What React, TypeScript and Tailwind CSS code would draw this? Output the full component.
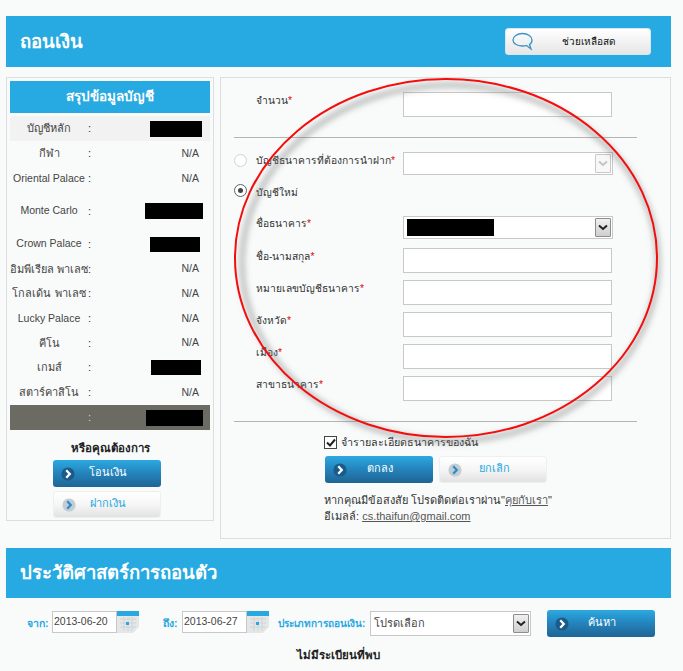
import React from "react";

const font = "font-['Liberation_Sans','Noto_Sans','DejaVu_Sans',sans-serif]";

const ChevronBadge: React.FC<{ light?: boolean }> = ({ light }) => (
  <svg width="14" height="14" viewBox="0 0 16 16" className="shrink-0">
    <circle cx="8" cy="8" r="7.5" fill={light ? "#c4cdd3" : "#1b5b8c"} />
    <path d="M6 3.8 L10 8 L6 12.2" fill="none" stroke={light ? "#2a8fc9" : "#ffffff"} strokeWidth="2.6" />
  </svg>
);

const ActionButton: React.FC<{ label: string; light?: boolean; className?: string }> = ({ label, light, className }) => (
  <div
    className={`relative flex h-[27px] w-[108px] items-center rounded-[3px] pl-[8px] text-[11px] ${
      light
        ? "border border-[#eef0f0] bg-gradient-to-b from-[#ffffff] via-[#f6f6f6] to-[#e2e2e2] text-[#27a8e0]"
        : "bg-gradient-to-b from-[#2ca9e2] via-[#2483bb] to-[#1f6495] text-white"
    } ${className ?? ""}`}
  >
    <ChevronBadge light={light} />
    <span className="flex-1 pr-[20px] pb-[2px] text-center">{label}</span>
  </div>
);

type Row = { label: string; value?: string; h: string; mask?: string; cls?: string; latin?: boolean };

const rows: Row[] = [
  { label: "บัญชีหลัก", h: "h-[25px]", mask: "w-[52px] h-[16px] mr-[8px]", cls: "bg-[#f2f2f2]" },
  { label: "กีฬา", value: "N/A", h: "h-[25px]" },
  { label: "Oriental Palace", value: "N/A", h: "h-[25px]", latin: true },
  { label: "Monte Carlo", h: "h-[40px]", mask: "w-[58px] h-[16px] mr-[7px]", latin: true },
  { label: "Crown Palace", h: "h-[26px]", mask: "w-[50px] h-[15px] mr-[10px]", latin: true },
  { label: "อิมพีเรียล พาเลซ", value: "N/A", h: "h-[24px]" },
  { label: "โกลเด้น พาเลซ", value: "N/A", h: "h-[25px]" },
  { label: "Lucky Palace", value: "N/A", h: "h-[25px]", latin: true },
  { label: "คีโน", value: "N/A", h: "h-[24px]" },
  { label: "เกมส์", h: "h-[25px]", mask: "w-[50px] h-[15px] mr-[9px]" },
  { label: "สตาร์คาสิโน", value: "N/A", h: "h-[25px]" },
  { label: "", h: "h-[25px]", mask: "w-[57px] h-[16px] mr-[7px]", cls: "bg-[#6b6b63] text-[#d8d8d8]" },
];

const Req = () => <span className="text-[#e00000]">*</span>;

const TextBox: React.FC<{ className?: string }> = ({ className }) => (
  <div className={`h-[25px] w-[209px] border border-[#c8c8c8] bg-white ${className ?? ""}`} />
);

const SelectBox: React.FC<{ disabled?: boolean; children?: React.ReactNode; w?: string; h?: string }> = ({ disabled, children, w, h }) => (
  <div className={`flex items-center border border-[#c8c8c8] bg-white pr-[1px] ${h ?? "h-[23px]"} ${w ?? "w-[210px]"}`}>
    <div className="flex-1 pl-[3px]">{children}</div>
    <div
      className={`flex h-[19px] w-[16px] items-center justify-center rounded-[1px] border ${
        disabled ? "border-[#c8c8c8] bg-[#f8f8f8]" : "border-[#8d8d8d] bg-gradient-to-b from-[#f0f0f0] to-[#cfcfcf]"
      }`}
    >
      <svg width="10" height="7" viewBox="0 0 10 7">
        <path d="M1 1.5 L5 5 L9 1.5" fill="none" stroke={disabled ? "#c4c4c4" : "#222222"} strokeWidth="2" />
      </svg>
    </div>
  </div>
);

const FormRow: React.FC<{ label: React.ReactNode; h?: string; children?: React.ReactNode }> = ({ label, h, children }) => (
  <div className={`flex items-center ${h ?? "h-[32px]"}`}>
    <div className="w-[169px] pl-[22px] pb-[8px] text-[10.25px] whitespace-nowrap">{label}</div>
    {children}
  </div>
);

const Radio: React.FC<{ on?: boolean }> = ({ on }) => (
  <span
    className={`flex h-[13px] w-[13px] shrink-0 items-center justify-center rounded-full border bg-white ${
      on ? "border-[#5a6272]" : "border-[#cfd3d3]"
    }`}
  >
    {on && <span className="h-[5px] w-[5px] rounded-full bg-[#444444]" />}
  </span>
);

const CalendarIcon = () => (
  <svg width="22" height="22" viewBox="0 0 22 22" className="shrink-0">
    <rect x="0" y="0" width="22" height="22" fill="#e4e7e8" />
    <rect x="0" y="0" width="22" height="5" fill="#27a8e0" />
    <path d="M3 8H19M3 12H19M3 16H19M7 6V20M11 6V20M15 6V20" stroke="#d0d4d6" strokeWidth="1" />
    <rect x="9" y="11" width="3" height="3" fill="#27a8e0" />
    <path d="M16 22 L22 16 L22 22 Z" fill="#fbfcfc" />
  </svg>
);

const DateField: React.FC<{ value: string }> = ({ value }) => (
  <div className="mb-[3px] flex">
    <div className="flex h-[22px] w-[65px] items-center border border-[#c8c8c8] bg-white pl-[1px] text-[10.5px] text-[#444444]">{value}</div>
    <CalendarIcon />
  </div>
);

const Banner: React.FC<{ title: string; children?: React.ReactNode; h: string }> = ({ title, children, h }) => (
  <div className={`flex items-center justify-between bg-[#27aae1] pl-[14px] pr-[20px] text-[18.5px] font-bold text-white ${h}`}>
    <span>{title}</span>
    {children}
  </div>
);

const App: React.FC = () => {
  return (
    <div className={`relative h-[671px] w-[683px] overflow-hidden bg-[#f9fbfb] pt-[16px] pl-[6px] text-[11px] text-[#333333] ${font}`}>
      <div className="w-[665px]">
        <Banner title="ถอนเงิน" h="h-[51px]">
          <div className="flex h-[27px] w-[146px] items-center rounded-[3px] border border-[#d5e8f2] bg-gradient-to-b from-[#ffffff] to-[#e6e6e6] pl-[6px] text-[10px] font-normal text-[#111111]">
            <svg width="21" height="19" viewBox="0 0 21 19" className="shrink-0">
              <path
                d="M10.5 1.5 C5 1.5 1 4.5 1 8 C1 11.5 5 14 10 14 C12 14 13.5 14 14.5 13.5 L19 17 L17.5 12.5 C19.5 11.5 20 9.5 20 8 C20 4.5 16 1.5 10.5 1.5 Z"
                fill="none"
                stroke="#3d93c4"
                strokeWidth="1.3"
              />
            </svg>
            <span className="flex-1 pr-[14px] pl-[8px] text-center">ช่วยเหลือสด</span>
          </div>
        </Banner>

        <div className="mt-[10px] flex gap-[6px]">
          <div className="h-[444px] w-[208px] border border-[#dcdfdf] px-[3px] pt-[3px]">
            <div className="flex h-[32px] items-center justify-center bg-[#27aae1] text-[13.5px] font-bold text-white">สรุปข้อมูลบัญชี</div>
            <div className="mt-[3px]">
              {rows.map((r, i) => (
                <div key={i} className={`flex items-center ${r.h} ${r.cls ?? ""}`}>
                  <div className={`w-[78px] shrink-0 whitespace-nowrap text-center text-[#444444] ${r.latin ? "text-[10.5px]" : "text-[11px]"}`}>{r.label}</div>
                  <div className="w-[3px] text-center">:</div>
                  <div className="flex flex-1 justify-end">
                    {r.mask ? <div className={`bg-black ${r.mask}`} /> : <span className="mr-[11px] text-[10.5px] text-[#444444]">{r.value}</span>}
                  </div>
                </div>
              ))}
            </div>
            <div className="mt-[10px] text-center text-[11.5px] leading-[17px] font-bold text-[#222222]">หรือคุณต้องการ</div>
            <div className="mt-[3px] mr-[6px] flex flex-col items-center gap-[4px]">
              <ActionButton label="โอนเงิน" />
              <ActionButton label="ฝากเงิน" light />
            </div>
          </div>

          <div className="h-[462px] w-[451px] border border-[#dcdfdf] pt-[14px] pl-[13px]">
            <FormRow label={<>จำนวน<Req /></>} h="h-[25px]">
              <TextBox />
            </FormRow>
            <div className="mt-[20px] h-px w-[403px] bg-[#b4b4b4]" />
            <div className="mt-[14px] flex h-[23px] items-center">
              <div className="w-[169px] whitespace-nowrap">
                <div className="flex items-center pb-[6px] text-[10.25px]">
                  <Radio />
                  <span className="ml-[9px]">บัญชีธนาคารที่ต้องการนำฝาก<Req /></span>
                </div>
              </div>
              <SelectBox disabled />
            </div>
            <div className="mt-[6px] flex h-[22px] items-center text-[10.25px]">
              <span className="pb-[3px]"><Radio on /></span>
              <span className="ml-[9px] pt-[1px]">บัญชีใหม่</span>
            </div>
            <div className="mt-[13px]">
              <FormRow label={<>ชื่อธนาคาร<Req /></>} h="h-[23px]">
                <SelectBox>
                  <div className="h-[17px] w-[87px] bg-black" />
                </SelectBox>
              </FormRow>
            </div>
            <div className="mt-[9px] flex flex-col gap-[7px]">
              <FormRow label={<>ชื่อ-นามสกุล<Req /></>} h="h-[25px]"><TextBox /></FormRow>
              <FormRow label={<>หมายเลขบัญชีธนาคาร<Req /></>} h="h-[25px]"><TextBox /></FormRow>
              <FormRow label={<>จังหวัด<Req /></>} h="h-[25px]"><TextBox /></FormRow>
              <FormRow label={<>เมือง<Req /></>} h="h-[25px]"><TextBox /></FormRow>
              <FormRow label={<>สาขาธนาคาร<Req /></>} h="h-[25px]"><TextBox /></FormRow>
            </div>
            <div className="mt-[20px] h-px w-[403px] bg-[#b4b4b4]" />
            <div className="mt-[14px] ml-[90px]">
              <div className="flex h-[13px] items-center">
                <span className="flex h-[13px] w-[13px] items-center justify-center border border-[#444444] bg-white">
                  <svg width="10" height="9" viewBox="0 0 10 9">
                    <path d="M1 4.5 L4 7.5 L9 1.5" fill="none" stroke="#222222" strokeWidth="2" />
                  </svg>
                </span>
                <span className="ml-[4px] text-[10.75px]">จำรายละเอียดธนาคารของฉัน</span>
              </div>
              <div className="mt-[7px] ml-[1px] flex gap-[6px]">
                <ActionButton label="ตกลง" />
                <ActionButton label="ยกเลิก" light />
              </div>
              <div className="mt-[9px] h-[16px] leading-[16px]">
                หากคุณมีข้อสงสัย โปรดติดต่อเราผ่าน"<span className="text-[#555555] underline">คุยกับเรา</span>"
              </div>
              <div className="h-[16px] leading-[16px]">
                อีเมลล์: <span className="text-[#555555] underline">cs.thaifun@gmail.com</span>
              </div>
            </div>
          </div>
        </div>

        <div className="mt-[9px]">
          <Banner title="ประวัติศาสตร์การถอนตัว" h="h-[50px]" />
        </div>

        <div className="mt-[12px] flex h-[27px] items-center">
          <span className="ml-[21px] w-[25px] text-[10.5px] font-bold text-[#27a8e0]">จาก:</span>
          <DateField value="2013-06-20" />
          <span className="ml-[24px] w-[19px] text-[10.5px] font-bold text-[#27a8e0]">ถึง:</span>
          <DateField value="2013-06-27" />
          <span className="ml-[9px] w-[92px] whitespace-nowrap text-[10px] font-bold text-[#27a8e0]">ประเภทการถอนเงิน:</span>
          <SelectBox w="w-[161px]" h="h-[25px]">
            <span className="text-[#444444]">โปรดเลือก</span>
          </SelectBox>
          <ActionButton label="ค้นหา" className="ml-[16px]" />
        </div>
        <div className="mt-[10px] text-center text-[11.5px] font-bold text-[#222222]">ไม่มีระเบียนที่พบ</div>
      </div>

      <svg width="683" height="671" viewBox="0 0 683 671" className="pointer-events-none absolute top-0 left-0">
        <defs>
          <filter id="ring-shadow" x="-10%" y="-10%" width="120%" height="120%">
            <feGaussianBlur stdDeviation="3" />
          </filter>
        </defs>
        <ellipse cx="450" cy="263" rx="208" ry="178" fill="none" stroke="#6f6f6f" strokeOpacity="0.6" strokeWidth="4" filter="url(#ring-shadow)" />
        <ellipse cx="446" cy="258" rx="211" ry="179" fill="none" stroke="#f50d0d" strokeWidth="2" />
      </svg>
    </div>
  );
};

export default App;
